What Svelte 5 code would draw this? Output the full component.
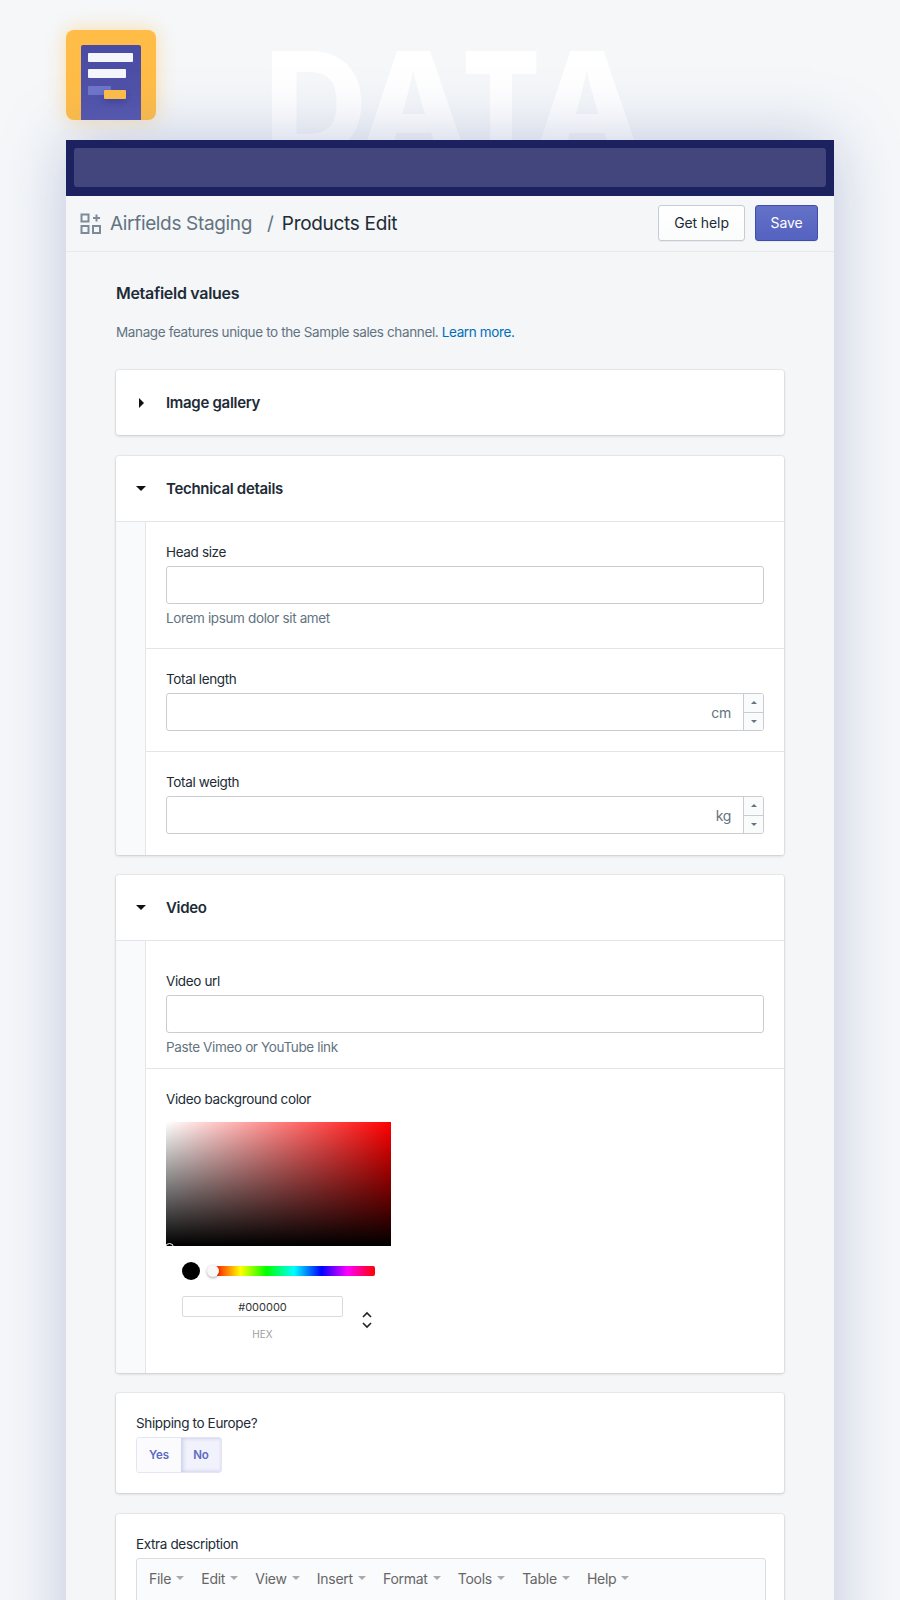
<script>
  const menus = ['File', 'Edit', 'View', 'Insert', 'Format', 'Tools', 'Table', 'Help'];
</script>

<div class="page">
  <div class="ghost" aria-hidden="true"><span class="gd">D</span><span class="ga1">A</span><span class="gt"><span>T</span></span><span class="ga2">A</span></div>
  <div class="logo">
    <div class="doc">
      <span class="bar b1"></span>
      <span class="bar b2"></span>
      <span class="bar b3"></span>
      <span class="bar b4"></span>
    </div>
  </div>

  <main class="panel">
    <div class="topbar"><div class="search"></div></div>
    <header class="head">
      <svg class="apps" width="22" height="22" viewBox="0 0 22 22" fill="none" stroke="#7c8a99" stroke-width="2">
        <rect x="1.5" y="1.5" width="7" height="7" />
        <rect x="1.5" y="13" width="7" height="7" />
        <rect x="13" y="13" width="7" height="7" />
        <path d="M16.5 1.5v7M13 5h7" />
      </svg>
      <span class="crumb">Airfields Staging</span>
      <span class="slash">/</span>
      <span class="title">Products Edit</span>
      <div class="actions">
        <button class="btn">Get help</button>
        <button class="btn primary">Save</button>
      </div>
    </header>

    <div class="content">
      <h2>Metafield values</h2>
      <p class="lead">Manage features unique to the Sample sales channel. <a href="#top">Learn more.</a></p>

      <section class="card">
        <div class="card-head">
          <span class="tri right"></span>
          <h3>Image gallery</h3>
        </div>
      </section>

      <section class="card">
        <div class="card-head bordered">
          <span class="tri down"></span>
          <h3>Technical details</h3>
        </div>
        <div class="nested">
          <div class="row r-head">
            <label for="head">Head size</label>
            <input id="head" class="field" />
            <p class="help">Lorem ipsum dolor sit amet</p>
          </div>
          <div class="row r-num">
            <label for="len">Total length</label>
            <div class="numeric">
              <input id="len" class="plain" />
              <span class="unit">cm</span>
              <span class="stepper"><i><b class="up"></b></i><i><b class="dn"></b></i></span>
            </div>
          </div>
          <div class="row r-num last">
            <label for="wgt">Total weigth</label>
            <div class="numeric">
              <input id="wgt" class="plain" />
              <span class="unit">kg</span>
              <span class="stepper"><i><b class="up"></b></i><i><b class="dn"></b></i></span>
            </div>
          </div>
        </div>
      </section>

      <section class="card tight">
        <div class="card-head bordered">
          <span class="tri down"></span>
          <h3>Video</h3>
        </div>
        <div class="nested">
          <div class="row r-video">
            <label for="url">Video url</label>
            <input id="url" class="field" />
            <p class="help">Paste Vimeo or YouTube link</p>
          </div>
          <div class="row r-color last">
            <label class="color-label" for="hex">Video background color</label>
            <div class="sat"><span class="sat-thumb"></span></div>
            <div class="hue-row">
              <span class="swatch"></span>
              <div class="hue"><span class="hue-thumb"></span></div>
            </div>
            <div class="hex-row">
              <div class="hex-col">
                <input id="hex" class="hex" value="#000000" />
                <span class="hex-label">HEX</span>
              </div>
              <svg class="toggle-fmt" width="12" height="20" viewBox="0 0 12 20" fill="none" stroke="#222" stroke-width="1.6">
                <path d="M2 7l4-4 4 4M2 13l4 4 4-4" />
              </svg>
            </div>
          </div>
        </div>
      </section>

      <section class="card tight pad ship">
        <div class="lbl">Shipping to Europe?</div>
        <div class="seg">
          <span class="yes">Yes</span>
          <span class="no">No</span>
        </div>
      </section>

      <section class="card pad extra">
        <div class="lbl">Extra description</div>
        <div class="editor">
          <div class="menubar">
            {#each menus as m}
              <span class="menu">{m}<em></em></span>
            {/each}
          </div>
        </div>
      </section>
    </div>
  </main>
</div>

<style>
  :global(body) {
    margin: 0;
    background: #f5f7f9;
  }
  .page {
    position: relative;
    height: 1600px;
    overflow: hidden;
    background: #f5f7f9;
    font-family: Inter, "Liberation Sans", sans-serif;
    color: #212b36;
    padding: 30px 66px 0;
    box-sizing: border-box;
  }
  .ghost {
    position: absolute;
    left: 268px;
    top: 31px;
    display: flex;
    font-size: 143px;
    line-height: 1;
    font-weight: 800;
    color: #fff;
    white-space: nowrap;
  }
  .ghost > span { display: flex; justify-content: center; }
  .gd { width: 95px; }
  .ga1 { width: 102px; }
  .gt { width: 72px; font-weight: 900; }
  .gt span { display: block; transform: scaleX(0.78); }
  .ga2 { width: 101px; }
  .logo {
    position: relative;
    width: 90px;
    height: 90px;
    margin-bottom: 20px;
    background: #ffbd47;
    border-radius: 8px;
    box-shadow: 0 0 20px rgba(255, 189, 71, 0.45);
  }
  .doc {
    position: absolute;
    left: 15px;
    top: 15px;
    width: 60px;
    height: 75px;
    background: linear-gradient(#4a4ca3, #5355ad);
    border-radius: 2px 2px 0 0;
  }
  .bar {
    position: absolute;
    left: 7px;
    height: 9px;
    border-radius: 1px;
    background: #f4f6fb;
  }
  .b1 { top: 8px; width: 45px; }
  .b2 { top: 24px; width: 38px; }
  .b3 { top: 41px; width: 23px; background: #6f75c9; }
  .b4 { top: 45px; left: 23px; width: 22px; background: #ffbd47; box-shadow: 0 3px 6px rgba(30, 30, 90, .3); }

  .panel {
    position: relative;
    width: 768px;
    background: #f4f6f8;
    box-shadow: 0 0 60px rgba(110, 125, 180, 0.4);
    min-height: 1460px;
  }
  .topbar {
    height: 56px;
    padding: 8px 8px 9px;
    box-sizing: border-box;
    background: #1c2260;
  }
  .search {
    height: 39px;
    background: #43467c;
    border-radius: 3px;
  }
  .head {
    height: 56px;
    display: flex;
    align-items: center;
    padding: 0 16px 0 14px;
    box-sizing: border-box;
    border-bottom: 1px solid #e6e9ed;
  }
  .apps { margin-right: 8px; }
  .crumb { font-size: 19px; letter-spacing: -0.35px; color: #637381; }
  .slash { font-size: 19px; color: #637381; margin: 0 8px 0 15px; }
  .title { font-size: 19px; letter-spacing: -0.3px; color: #212b36; }
  .actions { margin: 0 0 2px auto; display: flex; gap: 10px; }
  .btn {
    width: 87px;
    height: 36px;
    padding: 0;
    font: 400 14px Inter, "Liberation Sans", sans-serif;
    letter-spacing: -0.1px;
    color: #212b36;
    background: linear-gradient(#fff, #fafbfb);
    border: 1px solid #c4cdd5;
    border-radius: 3px;
    box-shadow: 0 1px 0 rgba(22, 29, 37, .05);
  }
  .primary {
    width: 63px;
    color: #fff;
    background: linear-gradient(#6371c7, #5563c1);
    border-color: #3f4eae;
  }
  .content { padding: 0 50px; }
  h2 {
    margin: 0;
    padding-top: 30px;
    font-size: 16px;
    line-height: 22px;
    font-weight: 600;
    letter-spacing: -0.3px;
  }
  .lead {
    margin: 17px 0 0;
    font-size: 13.5px;
    letter-spacing: -0.37px;
    line-height: 22px;
    color: #637381;
  }
  a { color: #006fbb; text-decoration: none; }

  .card {
    margin-top: 21px;
    background: #fff;
    border-radius: 3px;
    box-shadow: 0 0 0 1px rgba(63, 63, 68, .05), 0 1px 3px rgba(63, 63, 68, .2);
    overflow: hidden;
  }
  .card.tight { margin-top: 20px; }
  .lead + .card { margin-top: 27px; }
  .card-head {
    height: 65px;
    display: flex;
    align-items: center;
    padding-left: 20px;
    box-sizing: border-box;
  }
  .card-head.bordered {
    height: 66px;
    border-bottom: 1px solid #e3e5e9;
  }
  h3 {
    margin: 0 0 0 20px;
    font-size: 15px;
    font-weight: 600;
    letter-spacing: -0.3px;
  }
  .tri { width: 10px; display: flex; justify-content: center; }
  .tri.right::before {
    content: "";
    border-left: 5px solid #111;
    border-top: 5px solid transparent;
    border-bottom: 5px solid transparent;
  }
  .tri.down::before {
    content: "";
    border-top: 5px solid #111;
    border-left: 5px solid transparent;
    border-right: 5px solid transparent;
  }
  .nested {
    background: #f9fafb;
    padding-left: 29px;
  }
  .row {
    background: #fff;
    border-left: 1px solid #e3e5e9;
    border-bottom: 1px solid #e3e5e9;
    padding: 20px 20px 0 20px;
    box-sizing: border-box;
  }
  .row.last { border-bottom: 0; }
  .r-head { height: 127px; }
  .r-num { height: 103px; }
  .r-num.last { height: 103px; }
  .r-video { height: 128px; padding-top: 30px; }
  .r-color { height: 304px; }
  label, .lbl {
    display: block;
    font-size: 13.5px;
    letter-spacing: -0.36px;
    line-height: 20px;
    color: #212b36;
    margin-bottom: 4px;
  }
  .color-label { margin-bottom: 14px; }
  .field {
    display: block;
    width: 100%;
    height: 38px;
    box-sizing: border-box;
    background: #fff;
    border: 1px solid #c9cdd2;
    border-radius: 3px;
  }
  .help {
    margin: 4px 0 0;
    font-size: 13.5px;
    letter-spacing: -0.36px;
    line-height: 20px;
    color: #637381;
  }
  .numeric {
    display: flex;
    align-items: center;
    height: 38px;
    box-sizing: border-box;
    border: 1px solid #c9cdd2;
    border-radius: 3px;
    overflow: hidden;
  }
  .plain { flex: 1; min-width: 0; border: 0; outline: 0; height: 100%; padding: 0; background: transparent; }
  .unit { font-size: 14px; letter-spacing: -0.3px; color: #637381; margin-right: 12px; }
  .stepper {
    width: 20px;
    height: 100%;
    box-sizing: border-box;
    display: flex;
    flex-direction: column;
    border-left: 1px solid #c9cdd2;
    background: #fafbfb;
  }
  .stepper i {
    flex: 1;
    display: flex;
    align-items: center;
    justify-content: center;
  }
  .stepper i + i { border-top: 1px solid #c9cdd2; }
  .up {
    border-bottom: 3px solid #637381;
    border-left: 3px solid transparent;
    border-right: 3px solid transparent;
  }
  .dn {
    border-top: 3px solid #637381;
    border-left: 3px solid transparent;
    border-right: 3px solid transparent;
  }

  .sat {
    position: relative;
    width: 225px;
    height: 124px;
    margin-top: -1px;
    overflow: hidden;
    background:
      linear-gradient(to top, #000, rgba(0, 0, 0, 0)),
      linear-gradient(to right, #fff, rgba(255, 255, 255, 0)),
      #f00;
  }
  .sat-thumb {
    position: absolute;
    left: -1px;
    bottom: -6px;
    width: 9px;
    height: 9px;
    box-sizing: border-box;
    border-radius: 50%;
    border: 1px solid #fff;
  }
  .hue-row {
    display: flex;
    align-items: center;
    width: 193px;
    margin: 16px 0 0 16px;
  }
  .swatch {
    flex: none;
    width: 18px;
    height: 18px;
    border-radius: 50%;
    background: #000;
  }
  .hue {
    position: relative;
    flex: 1;
    height: 10px;
    margin-left: 13px;
    border-radius: 2px;
    background: linear-gradient(to right, #f00 0%, #ff0 17%, #0f0 33%, #0ff 50%, #00f 67%, #f0f 83%, #f00 100%);
  }
  .hue-thumb {
    position: absolute;
    left: -6px;
    top: -1px;
    width: 12px;
    height: 12px;
    border-radius: 50%;
    background: #f8f8f8;
    box-shadow: 0 1px 3px rgba(0, 0, 0, .35);
  }
  .hex-row {
    display: flex;
    margin: 16px 0 0 16px;
  }
  .hex-col {
    width: 161px;
    display: flex;
    flex-direction: column;
    align-items: center;
  }
  .hex {
    width: 100%;
    height: 21px;
    box-sizing: border-box;
    padding: 0;
    text-align: center;
    border: 1px solid #dadada;
    border-radius: 2px;
    font: 11px Inter, "Liberation Sans", sans-serif;
    color: #333;
    background: #fff;
  }
  .hex-label {
    margin-top: 11px;
    font: 10px Inter, "Liberation Sans", sans-serif;
    color: #a0a0a0;
    line-height: 13px;
  }
  .toggle-fmt { margin: 14px 0 0 18px; }

  .pad { padding: 20px 20px 0; box-sizing: border-box; }
  .ship { height: 100px; }
  .seg {
    display: inline-flex;
    height: 36px;
    box-sizing: border-box;
    border: 1px solid #e3e6f2;
    border-radius: 3px;
    overflow: hidden;
    font-size: 11.5px;
    font-weight: 600;
    color: #5c6ac4;
    line-height: 34px;
  }
  .yes { width: 44px; text-align: center; background: #fbfbfe; }
  .no {
    width: 40px;
    text-align: center;
    background: #f1f2fb;
    box-shadow: inset 2px 0 4px rgba(92, 106, 196, .22), inset 0 0 3px rgba(92, 106, 196, .12);
  }
  .extra { height: 200px; }
  .editor {
    width: 630px;
    height: 160px;
    box-sizing: border-box;
    border: 1px solid #dadde2;
    border-radius: 3px;
    background: #fafbfd;
  }
  .menubar {
    display: flex;
    height: 38px;
    align-items: center;
    padding-left: 12px;
    gap: 17.15px;
    font-size: 14px;
    letter-spacing: -0.27px;
    color: #666;
  }
  .menu { display: inline-flex; align-items: center; }
  .menu em {
    margin-left: 5px;
    border-top: 4px solid #aaa;
    border-left: 4px solid transparent;
    border-right: 4px solid transparent;
  }
</style>
